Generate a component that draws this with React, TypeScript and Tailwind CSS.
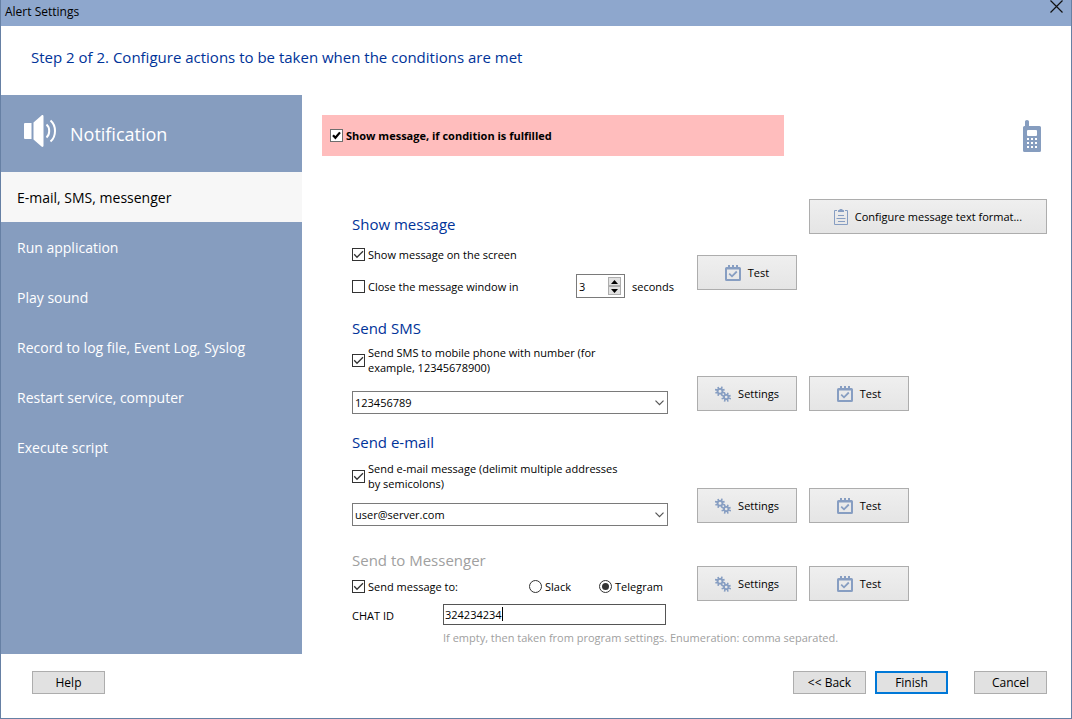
import { useState } from "react";
import type { ReactNode } from "react";

function CheckMark({ bold }: { bold?: boolean }) {
  return (
    <svg
      viewBox="0 0 13 13"
      aria-hidden="true"
      className="pointer-events-none col-start-1 row-start-1 size-[13px]"
      fill="none"
      stroke={bold ? "#000" : "#333"}
      strokeWidth={bold ? 2.2 : 1.3}
    >
      <path d={bold ? "M3 6.2 5.4 8.8 10 3.4" : "M2.2 6.3 5 9.2 11 3.2"} />
    </svg>
  );
}

function Check({
  id,
  initial,
  bold,
  children,
}: {
  id: string;
  initial?: boolean;
  bold?: boolean;
  children: ReactNode;
}) {
  const [on, setOn] = useState(!!initial);
  return (
    <div className="flex items-center gap-[3px] whitespace-nowrap">
      <span className="grid size-[13px] shrink-0">
        <input
          id={id}
          type="checkbox"
          checked={on}
          onChange={() => setOn(!on)}
          className={
            bold
              ? "col-start-1 row-start-1 size-[13px] appearance-none border border-[#6e6e6e] bg-white"
              : "col-start-1 row-start-1 size-[13px] appearance-none border border-[#333] bg-white"
          }
        />
        {on && <CheckMark bold={bold} />}
      </span>
      <label htmlFor={id} className={bold ? "font-bold" : ""}>
        {children}
      </label>
    </div>
  );
}

function Radio({
  id,
  checked,
  onChange,
  children,
}: {
  id: string;
  checked: boolean;
  onChange: () => void;
  children: ReactNode;
}) {
  return (
    <div className="flex items-center gap-[3px]">
      <span className="grid size-[13px] shrink-0 place-items-center">
        <input
          id={id}
          type="radio"
          name="messenger"
          checked={checked}
          onChange={onChange}
          className="col-start-1 row-start-1 size-[13px] appearance-none rounded-full border border-[#333] bg-white"
        />
        {checked && (
          <span className="pointer-events-none col-start-1 row-start-1 size-[7px] rounded-full bg-[#333]" />
        )}
      </span>
      <label htmlFor={id}>{children}</label>
    </div>
  );
}

function Combo({ label, value }: { label: string; value: string }) {
  return (
    <div className="grid w-[316px] items-center">
      <select
        aria-label={label}
        defaultValue={value}
        className="col-start-1 row-start-1 h-[23px] w-full appearance-none border border-[#7a7a7a] bg-white pr-6 pl-0.5 leading-5"
      >
        <option>{value}</option>
      </select>
      <svg
        viewBox="0 0 9 6"
        aria-hidden="true"
        className="pointer-events-none col-start-1 row-start-1 mr-1 h-1.5 w-[9px] justify-self-end"
        fill="none"
        stroke="#555"
        strokeWidth="1.2"
      >
        <path d="M.5.7 4.5 4.7 8.5.7" />
      </svg>
    </div>
  );
}

function CalendarIcon() {
  return (
    <svg viewBox="0 0 16 16" aria-hidden="true" className="size-4" fill="#879ec2">
      <path
        fillRule="evenodd"
        d="M1.5 2H3V0h2v2h2V0h2v2h2V0h2v2h1.500a1.500 1.500 0 0 1 1.500 1.500V14.500A1.500 1.500 0 0 1 14.500 16h-13A1.500 1.500 0 0 1 0 14.500V3.500A1.500 1.500 0 0 1 1.500 2ZM2 4.500V14h12V4.500Z"
      />
      <path d="M4.200 8.700 7 11.300 11.800 6.500" fill="none" stroke="#879ec2" strokeWidth="1.800" />
    </svg>
  );
}

function GearsIcon() {
  return (
    <svg viewBox="0 0 16 16" aria-hidden="true" className="size-4" fill="none" stroke="#879ec2">
      <circle cx="5" cy="5.200" r="2.400" strokeWidth="1.800" />
      <path
        strokeWidth="1.700"
        d="M3.800 3.200 3 1M6.300 3.200 7 .6M7 4.200 9.600 3.600M7.400 6.200 10 7M6.200 7.400 7 9.600M3.700 7.400 3 9.800M2.800 6.200.4 7M2.800 4.200 0 3.600"
      />
      <circle cx="11.200" cy="11" r="2.200" strokeWidth="1.800" />
      <path
        strokeWidth="1.600"
        d="M10.200 9 9.600 7M12.300 9 13 6.800M13.200 10.200 15.600 9.600M13.200 12 16 12.800M12.300 13 13 15.600M10.200 13 9.500 15.600M9.200 12 6.600 12.800M9.200 10.200 7 9.600"
      />
    </svg>
  );
}

function ClipboardIcon() {
  return (
    <svg viewBox="0 0 14 16" aria-hidden="true" className="h-4 w-3.5" fill="none" stroke="#879ec2">
      <path d="M3 1.500H.5v14h13v-14H11M4 6.500h6M2.500 9.500h9M4 12.500h7" />
      <path d="M4 3V1.500C4 1 5 1 5.200 1 5.500 0 6 0 7 0s1.500 0 1.800 1C9 1 10 1 10 1.500V3Z" fill="#879ec2" stroke="none" />
    </svg>
  );
}

const tool =
  "flex h-[35px] items-center justify-center gap-[7px] border border-[#adadad] bg-linear-to-b from-[#efefef] to-[#e5e5e5]";

function SettingsButton() {
  return (
    <button type="button" className={`${tool} w-[100px]`}>
      <GearsIcon />
      Settings
    </button>
  );
}

function TestButton() {
  return (
    <button type="button" className={`${tool} w-[100px]`}>
      <CalendarIcon />
      Test
    </button>
  );
}

function PushButton({ children, primary }: { children: ReactNode; primary?: boolean }) {
  return (
    <button
      type="button"
      className={
        primary
          ? "h-[23px] w-[73px] border-2 border-[#0078d7] bg-[#e1e1e1] leading-4"
          : "h-[23px] w-[73px] border border-[#adadad] bg-[#e1e1e1] leading-4"
      }
    >
      {children}
    </button>
  );
}

function Heading({ children, muted }: { children: ReactNode; muted?: boolean }) {
  return (
    <h3
      className={
        muted ? "text-[15px] leading-6 text-[#a0a0a0]" : "text-[15px] leading-6 text-[#003399]"
      }
    >
      {children}
    </h3>
  );
}

const pages = [
  "E-mail, SMS, messenger",
  "Run application",
  "Play sound",
  "Record to log file, Event Log, Syslog",
  "Restart service, computer",
  "Execute script",
];

export default function App() {
  const [page, setPage] = useState(0);
  const [service, setService] = useState("telegram");
  const [seconds, setSeconds] = useState(3);
  const [chatId, setChatId] = useState("324234234");

  return (
    <div className="flex min-h-screen flex-col border-x border-b border-[#6680a4] bg-white font-['Open_Sans','Noto_Sans',sans-serif] text-[12px] leading-[15px] text-black">
      <header className="flex h-[26px] items-center justify-between bg-[#8ea7cd] pr-2 pl-1">
        <h1 className="pb-0.5 leading-4">Alert Settings</h1>
        <button type="button" aria-label="Close" className="self-start">
          <svg viewBox="0 0 13 13" className="size-[13px]" fill="none" stroke="#111" strokeWidth="1.200">
            <path d="M.5.5 12.500 12.500M12.500.5.5 12.500" />
          </svg>
        </button>
      </header>

      <h2 className="flex h-[69px] items-center px-[30px] pb-1.5 text-[15px] text-[#003399]">
        Step 2 of 2. Configure actions to be taken when the conditions are met
      </h2>

      <div className="flex grow">
        <aside className="w-[301px] shrink-0 bg-[#869dbf] text-white">
          <div className="flex h-[77px] items-center gap-3.5 pl-[22px]">
            <svg viewBox="0 0 33 32" aria-hidden="true" className="mb-1.5 h-8 w-[33px]" fill="#fff">
              <path d="M2 8h6.500v16H2a1 1 0 0 1-1-1V9a1 1 0 0 1 1-1ZM10.500 7.500 18.500.4c.8-.6 2-.4 2 .8v29.600c0 1.200-1.200 1.400-2 .8L10.500 24.500Z" />
              <path
                d="M23.500 9.500c3.600 3 3.600 10 0 13M27.500 5.500c6 5 6 16 0 21"
                fill="none"
                stroke="#fff"
                strokeWidth="2"
              />
            </svg>
            <span className="text-[18px] leading-6">Notification</span>
          </div>
          <nav>
            <ul>
              {pages.map((name, i) => (
                <li key={name}>
                  <button
                    type="button"
                    onClick={() => setPage(i)}
                    className={
                      i === page
                        ? "h-[50px] w-full bg-[#f7f7f7] px-4 text-left text-[14px] text-black"
                        : "h-[50px] w-full px-4 text-left text-[14px] text-white"
                    }
                  >
                    {name}
                  </button>
                </li>
              ))}
            </ul>
          </nav>
        </aside>

        <main className="grow pt-5 pr-6 pl-5 text-[11px] leading-[15px]">
          <div className="flex items-center justify-between">
            <div className="flex h-[41px] w-[462px] items-center bg-[#ffbdbd] pl-2">
              <Check id="fulfilled" initial bold>
                Show message, if condition is fulfilled
              </Check>
            </div>
            <svg viewBox="0 0 18 32" aria-hidden="true" className="mr-1.5 h-8 w-[18px]">
              <path
                d="M2 6V1.800C2 .8 2.800 0 4 0s2 .8 2 1.800V6h10.500A1.500 1.500 0 0 1 18 7.500v23a1.500 1.500 0 0 1-1.500 1.500h-15A1.500 1.500 0 0 1 0 30.500v-23A1.500 1.500 0 0 1 1.500 6Z"
                fill="#869dbf"
              />
              <path
                d="M5 10h8a1 1 0 0 1 1 1v4a1 1 0 0 1-1 1H5a1 1 0 0 1-1-1v-4a1 1 0 0 1 1-1ZM4 18h2v2H4ZM8 18h2v2H8ZM12 18h2v2h-2ZM4 22h2v2H4ZM8 22h2v2H8ZM12 22h2v2h-2ZM4 26h2v2H4ZM8 26h2v2H8ZM12 26h2v2h-2Z"
                fill="#fff"
              />
            </svg>
          </div>

          <section className="mt-[43px] flex pl-[30px]">
            <div className="w-[345px] shrink-0 pt-[13px]">
              <Heading>Show message</Heading>
              <div className="mt-[11px]">
                <Check id="on-screen" initial>
                  Show message on the screen
                </Check>
              </div>
              <div className="mt-3 flex items-center">
                <div className="w-56">
                  <Check id="auto-close">Close the message window in</Check>
                </div>
                <div className="flex h-6 w-[49px] items-center border border-[#7a7a7a] pr-[3px]">
                  <input
                    id="seconds"
                    type="text"
                    inputMode="numeric"
                    value={seconds}
                    onChange={(e) => setSeconds(Number(e.target.value) || 0)}
                    className="h-full w-full min-w-0 pl-0.5 outline-none"
                  />
                  <div className="flex flex-col">
                    <button
                      type="button"
                      aria-label="Increase"
                      onClick={() => setSeconds(seconds + 1)}
                      className="grid h-[9px] w-[13px] place-items-center border border-[#adadad] bg-[#e1e1e1]"
                    >
                      <svg viewBox="0 0 7 4" className="h-1 w-[7px]">
                        <path d="M0 4 3.500 0 7 4Z" />
                      </svg>
                    </button>
                    <button
                      type="button"
                      aria-label="Decrease"
                      onClick={() => setSeconds(Math.max(0, seconds - 1))}
                      className="grid h-[9px] w-[13px] place-items-center border border-[#adadad] bg-[#e1e1e1]"
                    >
                      <svg viewBox="0 0 7 4" className="h-1 w-[7px]">
                        <path d="M0 0 3.500 4 7 0Z" />
                      </svg>
                    </button>
                  </div>
                </div>
                <label htmlFor="seconds" className="pl-[7px]">
                  seconds
                </label>
              </div>
            </div>
            <div className="flex grow flex-col gap-[21px]">
              <button type="button" className={`${tool} w-[238px] self-end`}>
                <ClipboardIcon />
                Configure message text format...
              </button>
              <TestButton />
            </div>
          </section>

          <section className="mt-[18px] flex items-end pl-[30px]">
            <div className="w-[345px] shrink-0">
              <Heading>Send SMS</Heading>
              <div className="mt-[5px] mb-4">
                <Check id="sms" initial>
                  Send SMS to mobile phone with number (for
                  <br />
                  example, 12345678900)
                </Check>
              </div>
              <Combo label="Phone number" value="123456789" />
            </div>
            <div className="mb-[3px] flex gap-3">
              <SettingsButton />
              <TestButton />
            </div>
          </section>

          <section className="mt-4 flex items-end pl-[30px]">
            <div className="w-[345px] shrink-0">
              <Heading>Send e-mail</Heading>
              <div className="mt-[7px] mb-3">
                <Check id="email" initial>
                  Send e-mail message (delimit multiple addresses
                  <br />
                  by semicolons)
                </Check>
              </div>
              <Combo label="E-mail addresses" value="user@server.com" />
            </div>
            <div className="mb-[3px] flex gap-3">
              <SettingsButton />
              <TestButton />
            </div>
          </section>

          <section className="mt-[22px] pl-[30px]">
            <div className="flex">
              <div className="w-[345px] shrink-0">
                <Heading muted>Send to Messenger</Heading>
                <div className="mt-[7px] flex">
                  <div className="w-[177px]">
                    <Check id="messenger" initial>
                      Send message to:
                    </Check>
                  </div>
                  <div className="w-[70px]">
                    <Radio
                      id="slack"
                      checked={service === "slack"}
                      onChange={() => setService("slack")}
                    >
                      Slack
                    </Radio>
                  </div>
                  <Radio
                    id="telegram"
                    checked={service === "telegram"}
                    onChange={() => setService("telegram")}
                  >
                    Telegram
                  </Radio>
                </div>
              </div>
              <div className="flex gap-3 pt-[18px]">
                <SettingsButton />
                <TestButton />
              </div>
            </div>
            <div className="mt-[3px] flex">
              <label htmlFor="chat-id" className="w-[91px] pt-1">
                CHAT ID
              </label>
              <div>
                <div className="relative w-[223px]">
                  <input
                    id="chat-id"
                    type="text"
                    value={chatId}
                    onChange={(e) => setChatId(e.target.value)}
                    className="block h-[21px] w-full border border-[#555] pl-px outline-none"
                  />
                  <span className="pointer-events-none absolute top-[3px] left-[59px] h-3.5 w-px bg-black" />
                </div>
                <p className="mt-[5px] text-[#a0a0a0]">
                  If empty, then taken from program settings. Enumeration: comma separated.
                </p>
              </div>
            </div>
          </section>
        </main>
      </div>

      <footer className="flex h-16 items-center pr-6 pb-[7px] pl-[31px]">
        <PushButton>Help</PushButton>
        <div className="ml-auto flex">
          <PushButton>{"<< Back"}</PushButton>
          <div className="mr-[26px] ml-[9px]">
            <PushButton primary>Finish</PushButton>
          </div>
          <PushButton>Cancel</PushButton>
        </div>
      </footer>
    </div>
  );
}
